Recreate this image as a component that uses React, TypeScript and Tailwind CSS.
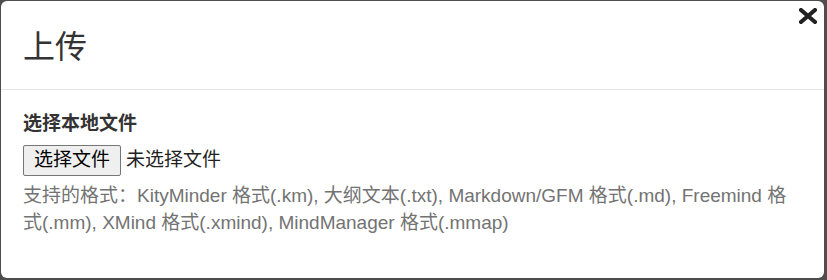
const FONT = "font-['Liberation_Sans','Noto_Sans_CJK_SC',sans-serif]";

function CloseIcon() {
  return (
    <svg width="18" height="16" viewBox="0 0 18 16" className="block">
      <path
        d="M2 2 L16 14 M16 2 L2 14"
        stroke="#222"
        strokeWidth="4.2"
        strokeLinecap="round"
      />
    </svg>
  );
}

export default function App() {
  return (
    <div className={`w-[827px] h-[280px] bg-[#4d4d4d] pt-[1px] pl-[1px] ${FONT}`}>
      <div className="relative w-[823px] h-[277px] bg-white rounded-[6px] overflow-hidden">
        <button className="absolute top-[7px] right-[7px]" aria-label="close">
          <CloseIcon />
        </button>

        <div className="h-[89px] border-b border-[#e5e5e5] px-[22px] pt-[26px]">
          <h4 className="text-[32px] leading-[40px] text-[#333] font-normal">上传</h4>
        </div>

        <div className="px-[22px] pt-[21px]">
          <label className="block text-[19px] leading-[26px] font-bold text-[#333]">
            选择本地文件
          </label>
          <div className="mt-[8px] flex items-center">
            <span className="h-[31px] px-[10px] flex items-center text-[19px] text-black bg-[#efefef] border border-[#767676] rounded-[2px]">
              选择文件
            </span>
            <span className="ml-[5px] text-[19px] text-[#222]">未选择文件</span>
          </div>
          <p className="mt-[7px] text-[19px] leading-[26.5px] text-[#737373]">
            支持的格式：KityMinder 格式(.km), 大纲文本(.txt), Markdown/GFM 格式(.md), Freemind 格式(.mm), XMind 格式(.xmind), MindManager 格式(.mmap)
          </p>
        </div>
      </div>
    </div>
  );
}
